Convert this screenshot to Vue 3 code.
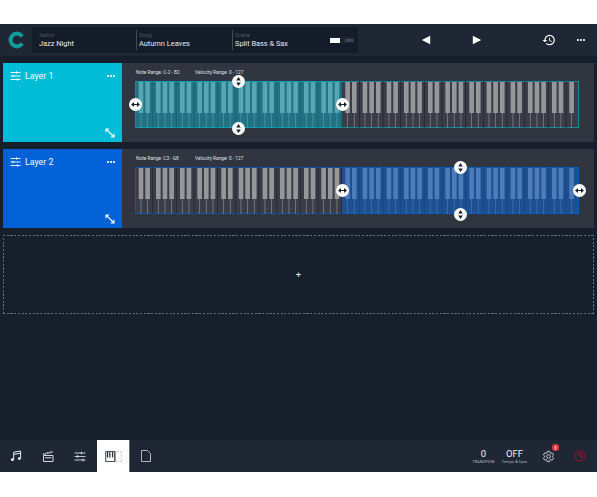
<template>
  <div class="app">
    <header class="topbar">
      <div class="logo">
        <svg width="18" height="18" viewBox="0 0 18 18">
          <path d="M14.2 5.3A6.4 6.4 0 1 0 14.2 12.7" fill="none" stroke="#0f9c9a" stroke-width="4" />
        </svg>
      </div>
      <div class="info">
        <div v-for="f in fields" :key="f.label" class="field" :style="{ width: f.width + 'px' }">
          <span class="field-label">{{ f.label }}</span>
          <span class="field-value">{{ f.value }}</span>
        </div>
        <div class="cpu">
          <span class="cpu-bar"></span>
          <span class="cpu-label">CPU</span>
        </div>
      </div>
      <button class="nav prev" aria-label="Previous">
        <svg width="10" height="10" viewBox="0 0 10 10"><path d="M9.2 0.8v8.4L0.8 5z" fill="#fff" /></svg>
      </button>
      <button class="nav next" aria-label="Next">
        <svg width="10" height="10" viewBox="0 0 10 10"><path d="M0.8 0.8v8.4L9.2 5z" fill="#fff" /></svg>
      </button>
      <button class="nav history" aria-label="History">
        <svg width="14" height="14" viewBox="0 0 24 24"><path fill="#fff" d="M13 3a9 9 0 0 0-9 9H1l3.89 3.89.07.14L9 12H6c0-3.87 3.13-7 7-7s7 3.13 7 7-3.13 7-7 7c-1.93 0-3.68-.79-4.94-2.06l-1.42 1.42A8.954 8.954 0 0 0 13 21a9 9 0 0 0 0-18zm-1 5v5l4.28 2.54.72-1.21-3.5-2.08V8H12z" /></svg>
      </button>
      <button class="nav more" aria-label="More">
        <span class="dots"><i></i><i></i><i></i></span>
      </button>
    </header>

    <main class="content">
      <section v-for="layer in layers" :key="layer.name" class="layer">
        <div class="tile" :style="{ background: layer.color }">
          <div class="tile-head">
            <svg width="11" height="10" viewBox="0 0 11 10" fill="none" stroke="#fff" stroke-width="0.9">
              <path d="M0.5 1.5h10M0.5 5h10M0.5 8.5h10" />
              <path d="M6.5 0.3v2.4M3 3.8v2.4M7.5 7.3v2.4" />
            </svg>
            <span class="tile-name">{{ layer.name }}</span>
            <span class="dots"><i></i><i></i><i></i></span>
          </div>
          <svg class="expand" width="10" height="10" viewBox="0 0 10 10" fill="none" stroke="#fff" stroke-width="1.1">
            <path d="M1.5 1.5l7 7M1 4.2V1h3.2M9 5.8V9H5.8" />
          </svg>
        </div>
        <div class="layer-body">
          <div class="ranges">
            <span class="note-range">Note Range: {{ layer.notes }}</span>
            <span>Velocity Range: {{ layer.velocity }}</span>
          </div>
          <div class="keyboard" :style="{ outlineColor: layer.border }">
            <svg class="keys" width="444" height="47" viewBox="0 0 444 47">
              <rect v-for="x in octaveLines" :key="'o' + x" :x="x - 0.4" y="0" width="0.8" height="47" fill="#24272f" />
              <rect v-for="x in blackKeys" :key="'l' + x" :x="x + 1.9" y="31" width="0.8" height="16" fill="#7f8187" />
              <rect v-for="x in blackKeys" :key="'b' + x" :x="x" y="1" width="4.6" height="31" fill="#96979b" />
            </svg>
            <div class="range" :style="{ left: layer.from + 'px', width: layer.to - layer.from + 'px', background: layer.tint }"></div>
            <span class="handle" :style="{ left: layer.from + 'px', top: '50%' }">
              <svg width="9" height="5" viewBox="0 0 9 5"><path d="M0 2.5L3 0v5zM9 2.5L6 0v5zM3 2.1h3v.8H3z" fill="#1a2230" /></svg>
            </span>
            <span class="handle" :style="{ left: layer.to + 'px', top: '50%' }">
              <svg width="9" height="5" viewBox="0 0 9 5"><path d="M0 2.5L3 0v5zM9 2.5L6 0v5zM3 2.1h3v.8H3z" fill="#1a2230" /></svg>
            </span>
            <span class="handle" :style="{ left: (layer.from + layer.to) / 2 + 'px', top: '0' }">
              <svg width="5" height="9" viewBox="0 0 5 9"><path d="M2.5 0L4.8 3.4H0.2zM2.5 9L4.8 5.6H0.2z" fill="#1a2230" /></svg>
            </span>
            <span class="handle" :style="{ left: (layer.from + layer.to) / 2 + 'px', top: '100%' }">
              <svg width="5" height="9" viewBox="0 0 5 9"><path d="M2.5 0L4.8 3.4H0.2zM2.5 9L4.8 5.6H0.2z" fill="#1a2230" /></svg>
            </span>
          </div>
        </div>
      </section>
      <div class="dropzone">+</div>
    </main>

    <footer class="bottombar">
      <button class="tab" aria-label="Songs">
        <svg width="12" height="12" viewBox="0 0 12 12" fill="none" stroke="#fff">
          <path d="M3.7 9.5V2.2L10.6 1v7.4M3.7 4.4l6.9-1.2" stroke-width="0.9" />
          <circle cx="2.4" cy="9.7" r="1.4" fill="#fff" stroke="none" />
          <circle cx="9.3" cy="8.6" r="1.4" fill="#fff" stroke="none" />
        </svg>
      </button>
      <button class="tab" aria-label="Scenes">
        <svg width="12" height="11" viewBox="0 0 12 11" fill="none" stroke="#d5d7db" stroke-width="1">
          <path d="M1.5 4.5h9.5v6H1.5zM3 6.8h6.5" />
          <path d="M1 3.4L10.5 0.8" stroke-width="1.8" stroke-dasharray="1.4 0.8" />
        </svg>
      </button>
      <button class="tab" aria-label="Mixer">
        <svg width="12" height="11" viewBox="0 0 12 11" fill="none" stroke="#d5d7db" stroke-width="0.9">
          <path d="M0.5 2h11M0.5 5.5h11M0.5 9h11" />
          <path d="M7.5 0.7v2.6M3.5 4.2v2.6M9 7.7v2.6" stroke-width="1.2" />
        </svg>
      </button>
      <button class="tab active" aria-label="Keyboard">
        <svg width="17" height="11" viewBox="0 0 18 12" fill="none">
          <path d="M11 0.5H0.5v11H11" stroke="#30343c" />
          <path d="M2.5 1v6M5 1v6M8 1v6M10.5 1v10" stroke="#30343c" stroke-width="1.4" />
          <path d="M11 0.5h6.5v11H11" stroke="#b9bbc0" stroke-dasharray="1.5 1" />
        </svg>
      </button>
      <button class="tab" aria-label="Page">
        <svg width="10" height="12" viewBox="0 0 10 12" fill="none" stroke="#c3c6cc" stroke-width="0.9">
          <path d="M0.5 0.5h6l3 3v8h-9z" />
        </svg>
      </button>
      <div class="right">
        <div class="stat">
          <span class="stat-value">0</span>
          <span class="stat-label">TRANSPOSE</span>
        </div>
        <div class="stat">
          <span class="stat-value">OFF</span>
          <span class="stat-label">Tempo &amp; Sync</span>
        </div>
        <button class="tab gear" aria-label="Settings">
          <svg width="13" height="13" viewBox="0 0 24 24" fill="none" stroke="#d5d7db" stroke-width="1.7">
            <path d="M19.14 12.94c.04-.3.06-.61.06-.94 0-.32-.02-.64-.07-.94l2.03-1.58a.49.49 0 0 0 .12-.61l-1.92-3.32a.488.488 0 0 0-.59-.22l-2.39.96c-.5-.38-1.03-.7-1.62-.94l-.36-2.54a.484.484 0 0 0-.48-.41h-3.84c-.24 0-.43.17-.47.41l-.36 2.54c-.59.24-1.13.57-1.62.94l-2.39-.96c-.22-.08-.47 0-.59.22L2.74 8.87c-.12.21-.08.47.12.61l2.03 1.58c-.05.3-.09.63-.09.94s.02.64.07.94l-2.03 1.58a.49.49 0 0 0-.12.61l1.92 3.32c.12.22.37.29.59.22l2.39-.96c.5.38 1.03.7 1.62.94l.36 2.54c.05.24.24.41.48.41h3.84c.24 0 .44-.17.47-.41l.36-2.54c.59-.24 1.13-.56 1.62-.94l2.39.96c.22.08.47 0 .59-.22l1.92-3.32c.12-.22.07-.47-.12-.61l-2.01-1.58z" />
            <circle cx="12" cy="12" r="3.4" />
          </svg>
          <span class="badge">!</span>
        </button>
        <button class="tab" aria-label="Panic">
          <svg width="12" height="12" viewBox="0 0 12 12" fill="none" stroke="#9c1233" stroke-width="1">
            <circle cx="6" cy="6" r="5.2" />
            <path d="M3.8 3.6h4.4v4.4M8 8L4 4" />
          </svg>
        </button>
      </div>
    </footer>
  </div>
</template>

<script setup>
const fields = [
  { label: 'Setlist', value: 'Jazz Night', width: 104 },
  { label: 'Song', value: 'Autumn Leaves', width: 96 },
  { label: 'Scene', value: 'Split Bass & Sax', width: 90 }
]

const layers = [
  { name: 'Layer 1', color: '#01bcd6', border: '#11899b', tint: 'rgba(0, 188, 212, 0.42)', notes: 'C-2 - B2', velocity: '0 - 127', from: 0.5, to: 207 },
  { name: 'Layer 2', color: '#0162d8', border: '#0c57ab', tint: 'rgba(1, 98, 216, 0.5)', notes: 'C3 - G8', velocity: '0 - 127', from: 207, to: 444 }
]

const octave = 41.33
const offsets = [3.67, 10.33, 21, 27.67, 34.33]

const blackKeys = []
const octaveLines = []
for (let i = 0; i < 11; i++) {
  for (const o of offsets) {
    const x = i * octave + o
    if (x < 436) blackKeys.push(x)
  }
  octaveLines.push(i * octave + 17.76)
  if (i > 0) octaveLines.push(i * octave)
}
</script>

<style>
html, body { background: #fff; }
</style>

<style scoped>
.app {
  margin-top: 24px;
  height: 448px;
  display: flex;
  flex-direction: column;
  font-family: Roboto, "Liberation Sans", sans-serif;
  color: #fff;
  background: #171f2c;
}
button {
  border: none;
  background: transparent;
  padding: 0;
  color: inherit;
  font: inherit;
  display: flex;
  align-items: center;
  justify-content: center;
}
.topbar {
  height: 32px;
  display: flex;
  align-items: center;
  background: #1f2735;
  flex: none;
}
.logo { width: 32px; box-sizing: border-box; padding-left: 1px; display: flex; justify-content: center; }
.info {
  width: 326px;
  height: 26px;
  display: flex;
  align-items: center;
  background: #151c29;
}
.field {
  height: 20px;
  display: flex;
  flex-direction: column;
  justify-content: center;
  padding-left: 7px;
  box-sizing: border-box;
  flex: none;
}
.field + .field { border-left: 1px solid #454b57; padding-left: 2px; }
.field-label { font-size: 5.5px; color: #4f5765; line-height: 7px; }
.field-value { font-size: 7.4px; line-height: 10px; color: #e6e8eb; white-space: nowrap; }
.cpu {
  margin-left: auto;
  margin-right: 4px;
  display: flex;
  align-items: center;
  gap: 5px;
  background: #1f2735;
  padding-right: 1px;
  height: 6px;
}
.cpu-bar { width: 10px; height: 5px; background: #fff; }
.cpu-label { font-size: 4px; color: #8b919c; }
.nav { width: 32px; height: 32px; flex: none; }
.prev { margin-left: 52px; }
.next { margin-left: 19px; }
.history { margin-left: 40px; }
.dots { display: inline-flex; gap: 1.4px; }
.dots i { width: 1.6px; height: 1.6px; background: #fff; display: block; border-radius: 50%; }
.content {
  flex: 1;
  padding: 7px 3px 0;
  display: flex;
  flex-direction: column;
  gap: 7px;
}
.layer {
  height: 79px;
  display: flex;
  background: #30353f;
  flex: none;
}
.tile {
  width: 119px;
  flex: none;
  position: relative;
  box-sizing: border-box;
  padding: 8px 7px 0;
}
.tile-head { display: flex; align-items: center; gap: 4px; }
.tile-name { font-size: 8.8px; flex: 1; color: #f2fbfd; }
.expand { position: absolute; right: 7px; bottom: 4px; }
.layer-body {
  flex: 1;
  padding: 6px 15px 0 13px;
}
.ranges {
  height: 7px;
  line-height: 7px;
  font-size: 4.8px;
  color: #dfe1e5;
  margin-bottom: 5px;
  padding-left: 1px;
  display: flex;
}
.note-range { width: 59px; }
.keyboard {
  height: 47px;
  position: relative;
  background: #3a3d48;
  outline: 1px solid;
  outline-offset: -1px;
}
.keys { position: absolute; left: 0; top: 0; display: block; }
.range { position: absolute; top: 0; bottom: 0; }
.handle {
  position: absolute;
  width: 13px;
  height: 13px;
  margin: -6.5px 0 0 -6.5px;
  border-radius: 50%;
  background: #fff;
  display: flex;
  align-items: center;
  justify-content: center;
}
.dropzone {
  height: 79px;
  box-sizing: border-box;
  display: flex;
  align-items: center;
  justify-content: center;
  font-size: 9.5px;
  color: #e8e9ec;
  background:
    repeating-linear-gradient(90deg, #666c78 0 2.2px, transparent 2.2px 3.7px) top / 100% 1px no-repeat,
    repeating-linear-gradient(90deg, #666c78 0 2.2px, transparent 2.2px 3.7px) bottom / 100% 1px no-repeat,
    repeating-linear-gradient(0deg, #666c78 0 2.2px, transparent 2.2px 3.7px) left / 1px 100% no-repeat,
    repeating-linear-gradient(0deg, #666c78 0 2.2px, transparent 2.2px 3.7px) right / 1px 100% no-repeat;
}
.bottombar {
  height: 32px;
  flex: none;
  display: flex;
  align-items: stretch;
  background: #1f2735;
}
.tab { width: 32px; height: 32px; flex: none; }
.tab.active {
  width: 33px;
  margin-left: 1px;
  background: #fff;
  border-right: 1px solid #6a707c;
  box-sizing: border-box;
}
.right { margin-left: auto; display: flex; align-items: center; padding-right: 1px; }
.stat {
  width: 31px;
  display: flex;
  flex-direction: column;
  align-items: center;
}
.stat-value { font-size: 9.5px; line-height: 11px; color: #eef0f2; }
.stat-label { font-size: 4px; line-height: 6px; color: #aeb3bb; white-space: nowrap; }
.gear { position: relative; margin-left: 2px; }
.badge {
  position: absolute;
  left: 20px;
  top: 4px;
  width: 7px;
  height: 7px;
  border-radius: 50%;
  background: #e5393b;
  font-size: 6px;
  line-height: 7px;
  font-weight: 700;
  text-align: center;
  color: #fff;
}
</style>
